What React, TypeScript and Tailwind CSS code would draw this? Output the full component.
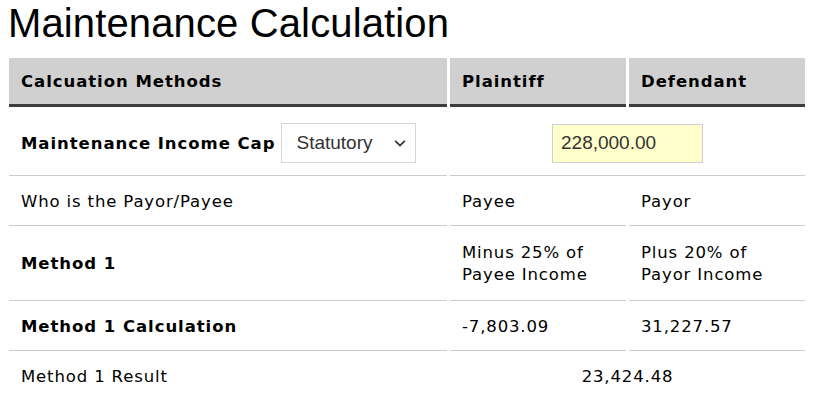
import React from "react";

const cellB = "border-b border-[#cccccc] flex items-center px-3 pt-[2px]";

export default function App() {
  return (
    <div className="w-[817px] h-[397px] overflow-hidden bg-white text-black">
      <h1 className="font-['Liberation_Sans',Arial,sans-serif] text-[40px] leading-[46px] font-normal pl-2 tracking-[0.13px]">
        Maintenance Calculation
      </h1>
      <div className="mt-3 ml-[9px] grid grid-cols-[438px_176px_176px] gap-x-[3px] font-['DejaVu_Sans',Verdana,sans-serif] text-[16.5px] leading-[22px] tracking-[0.86px]">
        {/* header */}
        <div className="h-[49px] bg-[#d0d0d0] border-b-[3px] border-[#3c3c3c] flex items-center px-3 pt-[2px] font-bold tracking-[0.95px]">
          Calcuation Methods
        </div>
        <div className="h-[49px] bg-[#d0d0d0] border-b-[3px] border-[#3c3c3c] flex items-center px-3 pt-[2px] font-bold tracking-[0.95px]">
          Plaintiff
        </div>
        <div className="h-[49px] bg-[#d0d0d0] border-b-[3px] border-[#3c3c3c] flex items-center px-3 pt-[2px] font-bold tracking-[0.95px]">
          Defendant
        </div>

        {/* row 1 */}
        <div className="border-b border-[#cccccc] flex items-center px-3 h-[69px] pt-1 gap-[6px] font-bold tracking-[0.95px]">
          <span className="pt-[2px]">Maintenance Income Cap</span>
          <div className="relative w-[135px] h-[40px] border border-[#d6d6d6] bg-white flex items-center pl-[14px] font-['Liberation_Sans',Arial,sans-serif] font-normal text-[19px] tracking-normal text-[#333333]">
            Statutory
            <svg
              className="absolute right-[9px] top-[15px]"
              width="12"
              height="9"
              viewBox="0 0 12 9"
              fill="none"
            >
              <path d="M1.2 1.8 L6 6.6 L10.8 1.8" stroke="#333333" strokeWidth="1.8" />
            </svg>
          </div>
        </div>
        <div className="border-b border-[#cccccc] flex items-center col-span-2 h-[69px] pt-1 justify-center">
          <div className="w-[151px] h-[39px] bg-[#ffffcc] border border-[#cfcfcf] flex items-center pl-2 font-['Liberation_Sans',Arial,sans-serif] text-[19px] tracking-normal text-[#333333]">
            228,000.00
          </div>
        </div>

        {/* row 2 */}
        <div className={`${cellB} h-[50px]`}>Who is the Payor/Payee</div>
        <div className={`${cellB} h-[50px]`}>Payee</div>
        <div className={`${cellB} h-[50px]`}>Payor</div>

        {/* row 3 */}
        <div className={`${cellB} h-[75px] font-bold tracking-[0.95px]`}>Method 1</div>
        <div className={`${cellB} h-[75px]`}>
          <span>
            Minus 25% of
            <br />
            Payee Income
          </span>
        </div>
        <div className={`${cellB} h-[75px]`}>
          <span>
            Plus 20% of
            <br />
            Payor Income
          </span>
        </div>

        {/* row 4 */}
        <div className={`${cellB} h-[50px] font-bold tracking-[0.95px]`}>Method 1 Calculation</div>
        <div className={`${cellB} h-[50px]`}>-7,803.09</div>
        <div className={`${cellB} h-[50px]`}>31,227.57</div>

        {/* row 5 */}
        <div className="h-[50px] flex items-center px-3 pt-[2px]">Method 1 Result</div>
        <div className="col-span-2 h-[50px] flex items-center justify-center pt-[2px]">23,424.48</div>
      </div>
    </div>
  );
}
